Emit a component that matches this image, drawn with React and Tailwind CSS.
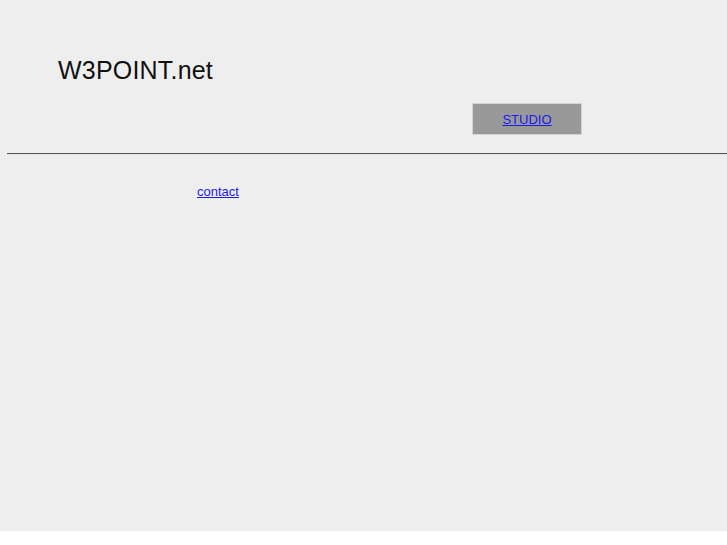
export default function App() {
  return (
    <div className="w-full bg-white" style={{ fontFamily: '"Liberation Sans", Arial, sans-serif' }}>
      <div className="flex h-[531px] flex-col bg-[#eeeeee]">
        <h1 className="ml-[58px] mt-[58px] text-[25px] font-normal leading-[25px] tracking-[0.2px] text-[#111111]">
          W3POINT.net
        </h1>
        <div className="ml-[472px] mt-[20px] flex h-[32px] w-[110px] items-center justify-center border border-[#d4d4d4] bg-[#999999]">
          <a href="#" className="text-[13px] leading-[15px] text-[#1a1aee] underline">
            STUDIO
          </a>
        </div>
        <div className="ml-[7px] mt-[18px] h-px bg-[#555555]" />
        <div className="h-px ml-[7px] bg-[#e2e2e2]" />
        <a href="#" className="ml-[197px] mt-[29px] self-start text-[13px] leading-[15px] text-[#1a1aee] underline">
          contact
        </a>
      </div>
    </div>
  );
}
